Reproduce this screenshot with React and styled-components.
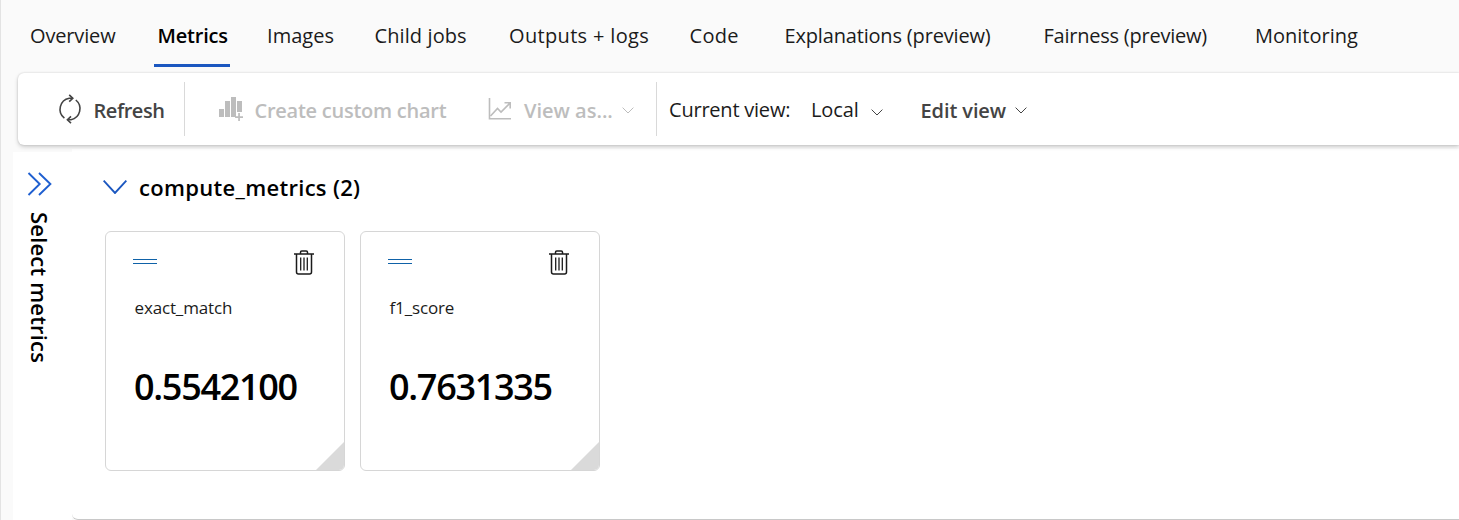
import React from "react";
import styled, { createGlobalStyle, css } from "styled-components";

const GlobalStyle = createGlobalStyle`
  *, *::before, *::after { box-sizing: border-box; }
  body {
    margin: 0;
    background: #fafafa;
    color: #1b1b1b;
    font-family: "Open Sans", "Noto Sans", sans-serif;
    font-size: 20px;
    overflow: hidden;
  }
  button { font: inherit; color: inherit; background: none; border: 0; padding: 0; }
  svg { display: block; flex: none; }
`;

const Page = styled.div`
  display: flex;
  flex-direction: column;
  height: 520px;
  border-left: 1px solid #e3e3e3;
`;

const TabBar = styled.nav`
  display: flex;
  flex: none;
  height: 67px;
  padding-left: 29px;
`;

const Tab = styled.button`
  position: relative;
  flex: none;
  width: ${(p) => p.$width}px;
  height: 67px;
  padding-bottom: 4px;
  line-height: 63px;
  display: block;
  padding-top: 4px;
  text-align: left;
  white-space: nowrap;
  letter-spacing: ${(p) => p.$spacing || 0}px;
  ${(p) =>
    p.$active &&
    css`
      color: #000;
      font-weight: 600;
      &::after {
        content: "";
        position: absolute;
        left: -3.5px;
        bottom: 0;
        width: 76px;
        height: 3px;
        background: #1b57c0;
      }
    `}
`;

const Toolbar = styled.div`
  position: relative;
  z-index: 1;
  flex: none;
  display: flex;
  align-items: center;
  height: 72px;
  margin: 6px 0 0 17px;
  padding-left: 38px;
  background: #fff;
  border-radius: 6px 0 0 6px;
  box-shadow: 0 0 2px rgba(0, 0, 0, 0.16), 0 2px 4px rgba(0, 0, 0, 0.18);
`;

const Command = styled.button`
  flex: none;
  display: flex;
  align-items: center;
  width: ${(p) => p.$width}px;
  height: 54px;
  padding-top: 3px;
  padding-left: ${(p) => p.$inset || 0}px;
  color: ${(p) => (p.$disabled ? "#bdbdbd" : "#444")};
  font-weight: 600;
  white-space: nowrap;
  letter-spacing: ${(p) => p.$spacing || 0}px;
  & > svg:first-child:not(:last-child) { margin: -3px ${(p) => p.$gap || 0}px 0 0; }
`;

const CommandLabel = styled.span`
  margin-right: 9px;
`;

const Divider = styled.span`
  flex: none;
  width: 1px;
  height: 54px;
  background: #d9d9d9;
`;

const ViewLabel = styled.span`
  flex: none;
  width: 142px;
  padding-left: 12px;
  letter-spacing: -0.22px;
  white-space: nowrap;
`;

const ViewSelect = styled.button`
  flex: none;
  display: flex;
  align-items: center;
  gap: 12px;
  padding-left: 12px;
  width: 121px;
  letter-spacing: -0.1px;
  & > svg { margin-top: 6px; }
`;

const Body = styled.div`
  flex: 1;
  display: flex;
  min-height: 0;
  padding-left: 12px;
`;

const SidePanel = styled.aside`
  flex: none;
  display: flex;
  flex-direction: column;
  align-items: flex-start;
  width: 59px;
  margin-top: 7px;
  padding: 20px 0 0 14px;
  background: #fff;
`;

const SideTitle = styled.div`
  writing-mode: vertical-rl;
  margin: 16px 0 0 -2px;
  font-size: 22px;
  font-weight: 600;
  line-height: 30px;
  letter-spacing: 0.18px;
  color: #000;
  white-space: nowrap;
`;

const Content = styled.main`
  flex: 1;
  margin-top: 4px;
  background: #fff;
  border-bottom: 1px solid #c8c8c8;
  border-bottom-left-radius: 6px;
`;

const Section = styled.section`
  padding: 18px 0 0 31px;
`;

const SectionHeader = styled.header`
  display: flex;
  align-items: center;
  gap: 12px;
  height: 40px;
`;

const SectionTitle = styled.h2`
  margin: 0;
  font-size: 22px;
  font-weight: 600;
  line-height: 30px;
  letter-spacing: 0.3px;
  color: #000;
`;

const Cards = styled.div`
  display: flex;
  gap: 15px;
  margin: 24px 0 0 2px;
`;

const Card = styled.article`
  position: relative;
  width: 240px;
  height: 240px;
  padding: 17px 30px 0 27px;
  border: 1px solid #d6d6d6;
  border-radius: 6px;
  overflow: hidden;
  background: #fff;
`;

const CardTop = styled.div`
  display: flex;
  justify-content: space-between;
  align-items: center;
  height: 26px;
`;

const DragHandle = styled.span`
  width: 24px;
  height: 5px;
  margin-bottom: 1px;
  border-top: 1px solid #0f62a8;
  border-bottom: 1px solid #0f62a8;
`;

const MetricName = styled.div`
  margin: 21px 0 0 1.5px;
  font-size: 17px;
  line-height: 24px;
  letter-spacing: -0.15px;
`;

const MetricValue = styled.div`
  margin: 43px 0 0 1px;
  font-size: 36px;
  font-weight: 600;
  line-height: 48px;
  letter-spacing: -1.3px;
  color: #000;
`;

const ResizeCorner = styled.span`
  position: absolute;
  right: -1px;
  bottom: -1px;
  width: 30px;
  height: 30px;
  background: #dadada;
  clip-path: polygon(100% 0, 100% 100%, 0 100%);
`;

const TABS = [
  { label: "Overview", width: 127.5, spacing: -0.15 },
  { label: "Metrics", width: 109.5, spacing: -0.2, active: true },
  { label: "Images", width: 107.5, spacing: 0.05 },
  { label: "Child jobs", width: 134.5, spacing: 0.1 },
  { label: "Outputs + logs", width: 180.5, spacing: 0.34 },
  { label: "Code", width: 95, spacing: 0.3 },
  { label: "Explanations (preview)", width: 259, spacing: -0.17 },
  { label: "Fairness (preview)", width: 211.5, spacing: -0.23 },
  { label: "Monitoring", width: 130 },
];

const METRICS = [
  { name: "exact_match", value: "0.5542100" },
  { name: "f1_score", value: "0.7631335" },
];

const Chevron = ({ width = 12, height = 7, color = "#444", stroke = 1 }) => (
  <svg width={width} height={height} viewBox={`0 0 ${width} ${height}`} fill="none" stroke={color} strokeWidth={stroke}>
    <path d={`M.6.6 ${width / 2} ${height - 1}L${width - 0.6}.6`} />
  </svg>
);

const RefreshIcon = () => (
  <svg width="26" height="30" viewBox="0 0 26 30" fill="none" stroke="#444" strokeWidth="1.6">
    <path d="M7.4 24.2A11.3 11.3 0 0 1 12.2 4.2h3.4M18.8 6A11.3 11.3 0 0 1 14 25.8h-3.4" />
    <path d="M12.2.9l3.6 3.4-3.6 3.4M14 22.4 10.4 25.8l3.6 3.4" />
  </svg>
);

const ChartAddIcon = () => (
  <svg width="26" height="26" viewBox="0 0 26 26" fill="#bdbdbd">
    <path d="M0 13h5v8H0zM6 5h5v16H6zM12 1h5v20h-5zM18 5h5v11h-5zM19.2 17h1.7v3.2H24v1.7h-3.1V25h-1.7v-3.1h-3.1v-1.7h3.1z" />
  </svg>
);

const LineChartIcon = () => (
  <svg width="24" height="24" viewBox="0 0 24 24" fill="none" stroke="#bdbdbd" strokeWidth="1.6">
    <path d="M1.5 1v20.8H23" />
    <path d="M2.5 19 9.5 11.5 13 15 22 6M16.5 5.7H22.2V11.4" />
  </svg>
);

const DoubleChevron = () => (
  <svg width="25" height="24" viewBox="0 0 25 24" fill="none" stroke="#1f5fd0" strokeWidth="1.9">
    <path d="M1.5 1 12.7 12 1.5 23M12 1 23.4 12 12 23" />
  </svg>
);

const TrashIcon = () => (
  <svg width="20" height="25" viewBox="0 0 20 25" fill="none" stroke="#1b1b1b" strokeWidth="1.5">
    <path d="M0 4h20M6.5 4V2.2Q6.5.9 7.8.9h4.4q1.3 0 1.3 1.3V4M2.5 4v18q0 2 2 2h11q2 0 2-2V4" />
    <path d="M6.7 7.5v13M10 7.5v13M13.3 7.5v13" strokeWidth="1.3" />
  </svg>
);

export default function App() {
  return (
    <Page>
      <GlobalStyle />
      <TabBar>
        {TABS.map((t) => (
          <Tab key={t.label} $width={t.width} $spacing={t.spacing} $active={t.active}>
            {t.label}
          </Tab>
        ))}
      </TabBar>
      <Toolbar>
        <Command $width={128} $gap={10.5} $spacing={-0.45} $inset={1}>
          <RefreshIcon />
          <CommandLabel>Refresh</CommandLabel>
        </Command>
        <Divider />
        <Command $width={264} $inset={33.5} $gap={10} $spacing={-0.25} $disabled>
          <ChartAddIcon />
          <CommandLabel>Create custom chart</CommandLabel>
        </Command>
        <Command $width={207} $inset={39} $gap={12} $disabled>
          <LineChartIcon />
          <CommandLabel>View as...</CommandLabel>
          <Chevron color="#bdbdbd" />
        </Command>
        <Divider />
        <ViewLabel>Current view:</ViewLabel>
        <ViewSelect>
          Local
          <Chevron />
        </ViewSelect>
        <Command $width={120} $spacing={-0.1} $inset={0.5}>
          <CommandLabel>Edit view</CommandLabel>
          <Chevron />
        </Command>
      </Toolbar>
      <Body>
        <SidePanel>
          <DoubleChevron />
          <SideTitle>Select metrics</SideTitle>
        </SidePanel>
        <Content>
          <Section>
            <SectionHeader>
              <Chevron width={24} height={14} color="#1b57c0" stroke={1.9} />
              <SectionTitle>compute_metrics (2)</SectionTitle>
            </SectionHeader>
            <Cards>
              {METRICS.map((m) => (
                <Card key={m.name}>
                  <CardTop>
                    <DragHandle />
                    <TrashIcon />
                  </CardTop>
                  <MetricName>{m.name}</MetricName>
                  <MetricValue>{m.value}</MetricValue>
                  <ResizeCorner />
                </Card>
              ))}
            </Cards>
          </Section>
        </Content>
      </Body>
    </Page>
  );
}
